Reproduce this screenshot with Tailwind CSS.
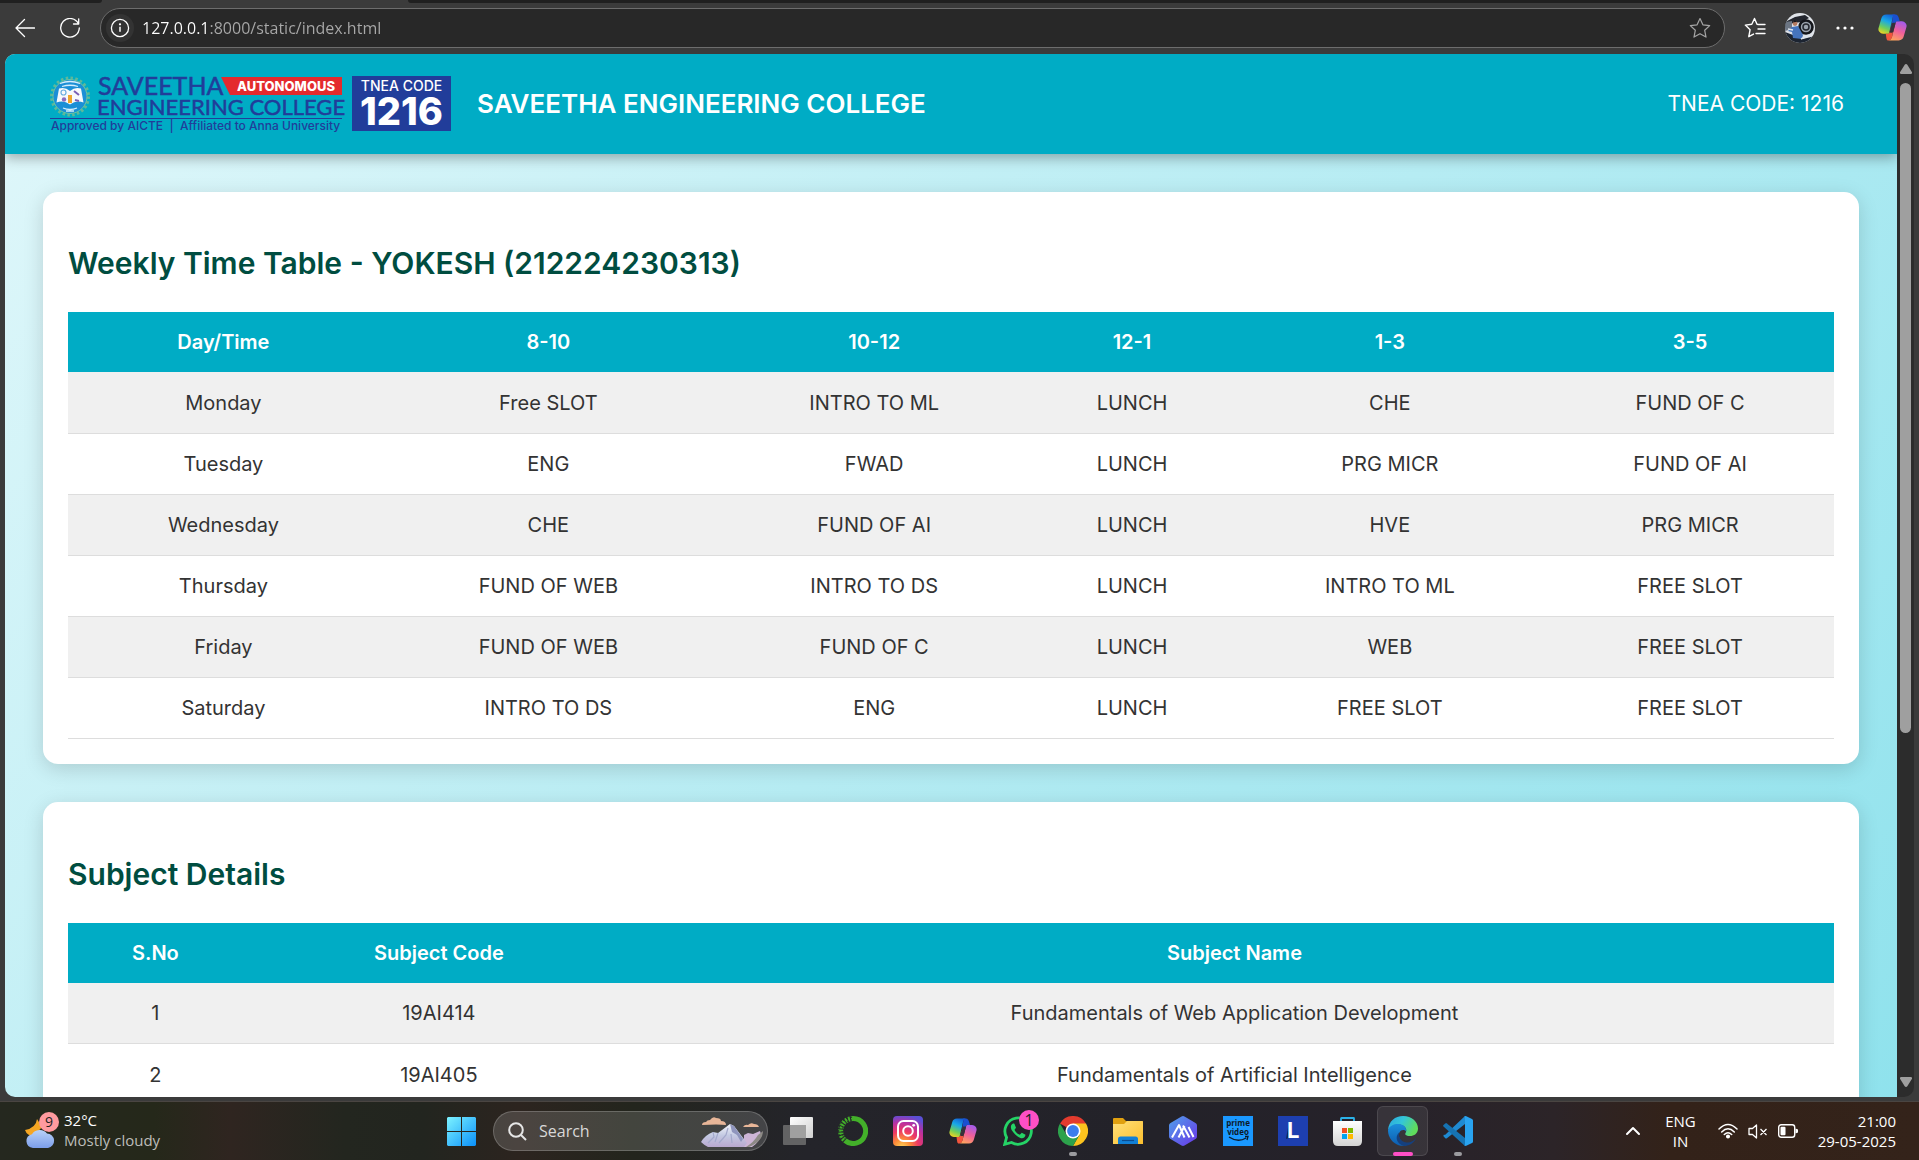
<!DOCTYPE html>
<html lang="en">
<head>
<meta charset="utf-8">
<title>Saveetha Engineering College - Time Table</title>
<script src="https://cdn.jsdelivr.net/npm/@tailwindcss/browser@4"></script>
</head>
<body class="flex h-screen flex-col overflow-hidden bg-[#3b3b3b] font-['Inter',sans-serif]">

<svg width="0" height="0" class="absolute" aria-hidden="true">
  <defs>
    <linearGradient id="cpA" x1="0.6" y1="0" x2="0.2" y2="1"><stop offset="0" stop-color="#1463d8"/><stop offset=".35" stop-color="#18a8e8"/><stop offset=".7" stop-color="#6fcf5a"/><stop offset="1" stop-color="#f4d321"/></linearGradient>
    <linearGradient id="cpB" x1="0.7" y1="0" x2="0.3" y2="1"><stop offset="0" stop-color="#a45bea"/><stop offset=".5" stop-color="#f0609a"/><stop offset="1" stop-color="#ffa55c"/></linearGradient>
    <symbol id="copilot" viewBox="0 0 28 26">
      <path d="M17.500 7H23a4.500 4.500 0 0 1 4.400 5.800l-2.600 9A5 5 0 0 1 20 25.500H9.500c3 0 3.600-2 4.300-4.500z" fill="url(#cpB)"/>
      <path d="M10.500 19H5a4.500 4.500 0 0 1-4.400-5.800l2.600-9A5 5 0 0 1 8 .5h10c-3 0-3.500 2-4.200 4.500z" fill="url(#cpA)"/>
      <path d="M13.500.5h3c2.500 0 3.200 1.800 3.800 4L21 7h-2.500c-1.200 0-1.800 1-2.200 2.500L15 13l-2-1 1-7C14.700 2 14.500.5 13.500.5z" fill="#1a4fd0"/>
      <path d="M7.500 19h2c1.200 0 1.800-1 2.200-2.500l1-3.500 2.200 1-1 7c-.7 2.500-1.300 4.500-4.200 4.500-1.500 0-1.500-2-2.200-6.500z" fill="#f2553d"/>
      <path d="m13.400 9.500-2 7.500q-.2 1 .8 1h1.500q.7 0 1-.8l2-7.500q.3-1.200-.8-1.200h-1.500q-.8 0-1 1z" fill="#37303a"/>
    </symbol>
  </defs>
</svg>

<!-- Browser toolbar -->
<header class="shrink-0">
  <div class="flex h-[3px] justify-between">
    <div class="w-[102px] rounded-br-lg bg-[#202020]"></div>
    <div class="ml-[306px] flex-1 rounded-bl-lg bg-[#202020]"></div>
  </div>
  <div class="flex h-[51px] items-center pr-3 pb-1 pl-2.5 pt-0.5">
    <button aria-label="Back" class="flex h-8 w-[30px] items-center justify-center">
      <svg class="size-5" viewBox="0 0 20 20" fill="none" stroke="#fff" stroke-width="1.3" stroke-linecap="round" stroke-linejoin="round"><path d="M19.500 10H1M9.500 1.500 1 10l8.500 8.500"/></svg>
    </button>
    <button aria-label="Refresh" class="ml-[15px] flex h-8 w-[30px] items-center justify-center">
      <svg class="size-5" viewBox="0 0 20 20" fill="none" stroke="#fff" stroke-width="1.3" stroke-linecap="round" stroke-linejoin="round"><path d="M18.500 6A9.300 9.300 0 1 0 19.300 10M18.700.8V6h-5.200"/></svg>
    </button>
    <div class="ml-[15px] flex h-10 flex-1 items-center rounded-full border border-[#6d6d6d] bg-[#282828] pl-[5px] pr-3">
      <button aria-label="Site information" class="flex size-[28px] items-center justify-center rounded-full bg-[#333333]">
        <svg class="size-5" viewBox="0 0 20 20" fill="none" stroke="#fff" stroke-width="1.3"><circle cx="10" cy="10" r="8.600"/><path d="M10 8.800v5" stroke-width="1.500"/><circle cx="10" cy="6.300" r=".5" fill="#fff"/></svg>
      </button>
      <input aria-label="Address" value="127.0.0.1:8000/static/index.html" class="ml-2 h-8 min-w-0 flex-1 bg-[linear-gradient(90deg,#fff_65px,#a9a9a9_65px)] bg-clip-text font-['Open_Sans',sans-serif] text-base text-transparent outline-none">
      <button aria-label="Add to favorites" class="flex size-6 items-center justify-center">
        <svg class="size-[22px]" viewBox="0 0 22 22" fill="none" stroke="#a5a5a5" stroke-width="1.200" stroke-linejoin="round"><path d="m11 1.500 2.900 6.300 6.800.8-5 4.700 1.300 6.800L11 16.700l-6 3.400 1.300-6.800-5-4.700 6.800-.8z"/></svg>
      </button>
    </div>
    <button aria-label="Favorites" class="ml-[18px] flex h-8 w-6 items-center justify-center">
      <svg class="h-[22px] w-[22px]" viewBox="0 0 22 22" fill="none" stroke="#fff" stroke-width="1.400" stroke-linecap="round" stroke-linejoin="round"><path d="M14.500 7.500 13 7.300 10.500 1.500 7.800 7.300l-6.500.8 4.800 4.600-1.300 7 4.700-2.600M14.500 7.500h6.500M14 12h7M12 16.500h9"/></svg>
    </button>
    <button aria-label="Profile" class="ml-[18px] size-[30px]">
      <svg class="size-[30px]" viewBox="0 0 30 30"><defs><clipPath id="av"><circle cx="15" cy="15" r="15"/></clipPath></defs><g clip-path="url(#av)"><path fill="#dfe3e8" d="M0 0h30v30H0z"/><path d="M10 4 20 2l4 3-7 4-9 1-8 5V9z" fill="#23262e"/><path d="M0 9l7-1v8l-7 2z" fill="#6c7684"/><circle cx="21" cy="14" r="6.500" fill="#9aa3ad" stroke="#14161b" stroke-width="2.600"/><circle cx="21" cy="14" r="3" fill="none" stroke="#23262e" stroke-width="1.500"/><path d="M0 19l8 3 10 4 12-3v7H0z" fill="#1c2431"/><path d="m7 14 6-1 5 9-1 4-9-1-1-6-4-1z" fill="#4574bd"/><circle cx="10" cy="10.500" r="2.400" fill="#b47a60"/><path d="m7.500 9.500 2-2.200 3 1.500z" fill="#15161a"/><path d="m3 16 5 1M16 26l8-4" stroke="#dbe3ee" stroke-width="1.500"/></g></svg>
    </button>
    <button aria-label="Settings and more" class="ml-[19px] flex h-8 w-[22px] items-center justify-center">
      <svg class="h-2 w-[18px]" viewBox="0 0 18 8" fill="#fff"><circle cx="2" cy="4" r="1.600"/><circle cx="9" cy="4" r="1.600"/><circle cx="16" cy="4" r="1.600"/></svg>
    </button>
    <button aria-label="Copilot" class="ml-[22px] h-[27px] w-[29px]"><svg class="h-[27px] w-[29px]"><use href="#copilot"/></svg></button>
  </div>
</header>

<!-- Page viewport -->
<div class="mx-[5px] mb-1 flex min-h-0 flex-1 overflow-hidden rounded-[10px] bg-[#2c2c2c]">
  <main class="min-w-0 flex-1 overflow-hidden">
    <div class="min-h-[1600px] bg-linear-[135deg,#e0f7fa,#80deea]">
      <div class="flex h-[100px] items-center bg-[#00acc5] pl-[45px] pr-[53px] text-white shadow-[0_4px_12px_rgba(0,0,0,0.3)]">
        <div class="flex items-start gap-2.5">
          <svg class="h-[56px] w-[292px] overflow-visible" viewBox="0 0 292 56" role="img" aria-label="Saveetha Engineering College">
            <circle cx="20" cy="20.500" r="18.500" fill="none" stroke="#5fb89a" stroke-width="3" stroke-dasharray="2.500 2.340"/>
            <circle cx="20" cy="20.500" r="17" fill="#1b8fd6" stroke="#6cc3a0" stroke-width="1"/>
            <path d="M10 7.500q10-4 20 0M12 10.500q8-2.500 16 0M13 32q7 3 14 0M16 35h8" stroke="#d5eefc" stroke-width="1.300" fill="none"/>
            <path d="M9 12.500q6-2 11 2.500 5-4.500 11-2.500l2.500 14q-7-3-13.500 2-6.500-5-13.500-2z" fill="#f7f9fb"/>
            <circle cx="13.500" cy="16.500" r="2.500" fill="none" stroke="#6aaee0" stroke-width="1.200"/><path d="m24 15 5 4M25 24l4 1" stroke="#7a5fb5" stroke-width="2"/><circle cx="14" cy="23.500" r="2.200" fill="#8c6cc0"/><path d="M18 19h4v8h-4z" fill="#f0a62c"/>
            <path d="M171 1h121v18H180z" fill="#e42a2d"/>
            <text x="48" y="19" font-family="Lato" font-size="25" fill="#213d9a" stroke="#213d9a" stroke-width=".5">SAVEETHA</text>
            <text x="187" y="15" font-family="Inter" font-weight="800" font-size="13" fill="#fff">AUTONOMOUS</text>
            <text x="47" y="39" font-family="Lato" font-size="22" fill="#213d9a" stroke="#213d9a" stroke-width=".5">ENGINEERING COLLEGE</text>
            <path d="M0 42.500h292" stroke="#213d9a" stroke-width="1.200"/>
            <text x="1" y="54" font-family="Inter" font-weight="500" font-size="12" fill="#213d9a">Approved by AICTE &#160;| &#160;Affiliated to Anna University</text>
          </svg>
          <svg class="h-[55px] w-[99px] overflow-visible" viewBox="0 0 99 55" role="img" aria-label="TNEA Code 1216">
            <path d="M0 0h99v55H0z" fill="#213d9a"/>
            <text x="49.500" y="15" text-anchor="middle" font-family="Inter" font-weight="500" font-size="14" fill="#fff">TNEA CODE</text>
            <text x="49.500" y="49" text-anchor="middle" font-family="Inter" font-weight="800" font-size="38" fill="#fff">1216</text>
          </svg>
        </div>
        <h1 class="ml-[26px] flex-1 pb-0.5 text-[26px] font-semibold whitespace-nowrap">SAVEETHA ENGINEERING COLLEGE</h1>
        <p class="text-[21px]">TNEA CODE: 1216</p>
      </div>

      <div class="flex flex-col gap-[38px] px-[38px] py-[38px] text-[#333]">
        <section class="rounded-[15px] bg-white p-[25px] shadow-[0_5px_20px_rgba(0,0,0,0.15)]">
          <h2 class="flex h-[95px] items-center pb-0.5 text-[30px] font-semibold text-[#004d40]">Weekly Time Table - YOKESH (212224230313)</h2>
          <table class="w-full table-fixed border-collapse text-center text-xl">
            <thead class="bg-[#00acc5] text-white">
              <tr class="h-[60px]"><th class="w-[17.6%] font-semibold">Day/Time</th><th class="w-[19.2%] font-semibold">8-10</th><th class="w-[17.7%] font-semibold">10-12</th><th class="w-[11.5%] font-semibold">12-1</th><th class="w-[17.7%] font-semibold">1-3</th><th class="font-semibold">3-5</th></tr>
            </thead>
            <tbody class="[&_td]:pt-px">
              <tr class="h-[61px] border-b border-[#ddd] bg-[#f0f0f0]"><td>Monday</td><td>Free SLOT</td><td>INTRO TO ML</td><td>LUNCH</td><td>CHE</td><td>FUND OF C</td></tr>
              <tr class="h-[61px] border-b border-[#ddd]"><td>Tuesday</td><td>ENG</td><td>FWAD</td><td>LUNCH</td><td>PRG MICR</td><td>FUND OF AI</td></tr>
              <tr class="h-[61px] border-b border-[#ddd] bg-[#f0f0f0]"><td>Wednesday</td><td>CHE</td><td>FUND OF AI</td><td>LUNCH</td><td>HVE</td><td>PRG MICR</td></tr>
              <tr class="h-[61px] border-b border-[#ddd]"><td>Thursday</td><td>FUND OF WEB</td><td>INTRO TO DS</td><td>LUNCH</td><td>INTRO TO ML</td><td>FREE SLOT</td></tr>
              <tr class="h-[61px] border-b border-[#ddd] bg-[#f0f0f0]"><td>Friday</td><td>FUND OF WEB</td><td>FUND OF C</td><td>LUNCH</td><td>WEB</td><td>FREE SLOT</td></tr>
              <tr class="h-[61px] border-b border-[#ddd]"><td>Saturday</td><td>INTRO TO DS</td><td>ENG</td><td>LUNCH</td><td>FREE SLOT</td><td>FREE SLOT</td></tr>
            </tbody>
          </table>
        </section>

        <section class="rounded-[15px] bg-white p-[25px] shadow-[0_5px_20px_rgba(0,0,0,0.15)]">
          <h2 class="flex h-24 items-center text-[30px] font-semibold text-[#004d40]">Subject Details</h2>
          <table class="w-full table-fixed border-collapse text-center text-xl">
            <thead class="bg-[#00acc5] text-white">
              <tr class="h-[60px]"><th class="w-[9.9%] font-semibold">S.No</th><th class="w-[22.2%] font-semibold">Subject Code</th><th class="font-semibold">Subject Name</th></tr>
            </thead>
            <tbody class="[&_td]:pt-px">
              <tr class="h-[61px] border-b border-[#ddd] bg-[#f0f0f0]"><td>1</td><td>19AI414</td><td>Fundamentals of Web Application Development</td></tr>
              <tr class="h-[61px] border-b border-[#ddd]"><td>2</td><td>19AI405</td><td>Fundamentals of Artificial Intelligence</td></tr>
            </tbody>
          </table>
        </section>
      </div>
    </div>
  </main>
  <!-- Scrollbar -->
  <div class="flex w-[17px] shrink-0 flex-col items-center py-2.5">
    <svg class="h-2.5 w-3" viewBox="0 0 12 10" fill="#9f9f9f"><path d="M6 0q.8 0 1.300.8L12 8.200q.3 1.800-1.200 1.800H1.200Q-.3 10 0 8.200L4.700.8Q5.200 0 6 0z"/></svg>
    <div class="mt-[9px] h-[63.5%] w-[11px] rounded-full bg-[#9f9f9f]"></div>
    <svg class="mt-auto h-2.5 w-3 rotate-180" viewBox="0 0 12 10" fill="#9f9f9f"><path d="M6 0q.8 0 1.300.8L12 8.200q.3 1.800-1.200 1.800H1.200Q-.3 10 0 8.200L4.700.8Q5.200 0 6 0z"/></svg>
  </div>
</div>

<!-- Taskbar -->
<footer class="grid h-[59px] shrink-0 grid-cols-[1fr_auto_1fr] items-center border-t border-[#4a4542] bg-[linear-gradient(90deg,#25281f_0%,#25281a_8%,#2f2520_12%,#23261f_18%,#22251f_22%,#2c241f_27%,#23251d_33%,#24242a_42%,#232229_60%,#26222a_72%,#2c2428_81%,#332219_87%,#34231a_100%)] font-['Open_Sans',sans-serif] text-white">
  <button class="flex items-center gap-1 justify-self-start pb-0.5 pl-6 text-left">
    <svg class="size-9" viewBox="0 0 36 36"><defs><linearGradient id="cl" x1="0" y1="0" x2="0" y2="1"><stop offset="0" stop-color="#b9d2f8"/><stop offset="1" stop-color="#7c9eea"/></linearGradient></defs><path d="M13 7q-1 9-12 11 2 6 9 6l8-9z" fill="#f5a623"/><path d="M9 36a7.500 7 0 0 1-1-13.700 8.500 7.500 0 0 1 15-.8A7.300 7.300 0 0 1 24 36z" fill="url(#cl)"/><circle cx="25" cy="10" r="10" fill="#ff9a9f"/><text x="25" y="15" text-anchor="middle" font-size="14" fill="#222">9</text></svg>
    <span class="flex flex-col text-[15px] leading-5"><span>32°C</span><span class="text-[#bdbdb9]">Mostly cloudy</span></span>
  </button>

  <nav class="flex items-center" aria-label="Apps">
    <button aria-label="Start" class="flex h-[50px] w-[55px] items-center justify-center">
      <svg class="size-[29px]" viewBox="0 0 29 29"><defs><linearGradient id="win" x1="0" y1="0" x2="1" y2="1"><stop offset="0" stop-color="#7df3ff"/><stop offset="1" stop-color="#0a90fa"/></linearGradient></defs><path fill="url(#win)" d="M1 0h13v14H0V1zM15 0h13l1 1v13H15zM0 15h14v14H1l-1-1zM15 15h14v13l-1 1H15z"/></svg>
    </button>
    <div class="mr-0.5 ml-1 flex h-10 w-[275px] items-center rounded-full border border-white/20 bg-white/15 pl-3.5">
      <svg class="size-[19px] shrink-0" viewBox="0 0 19 19" fill="none" stroke="#e6e6e6" stroke-width="2"><circle cx="8" cy="8" r="6.800"/><path d="m13 13 5 5"/></svg>
      <input type="text" aria-label="Search" placeholder="Search" class="ml-3 min-w-0 flex-1 bg-transparent text-base text-white outline-none placeholder:text-[#d8d8d8]">
      <svg class="mr-[3px] h-[34px] w-[64px] shrink-0" viewBox="0 0 64 34"><defs><linearGradient id="mt" x1="0" y1="0" x2="0" y2="1"><stop offset="0" stop-color="#f4f6fc"/><stop offset=".5" stop-color="#c3c9e2"/><stop offset="1" stop-color="#b9a8cf"/></linearGradient></defs><path d="M2 11q0-3 4-3 1-2 4-2 3-4 6-2 5 0 5 3 5 0 5 4-8-1-24 0zM43 13q2-3 5-2 3-3 6-1 4 0 5 3z" fill="#e8b698"/><path d="M44 33V21l4-2 5 1 7-3 1 3q-1 8-9 13z" fill="#cdb5d6"/><path d="M63 17q0 10-14 16h-3q8-5 12-12z" fill="#8d8a86"/><path d="M1 28q4-7 12-10l5 1 12-9 4 2 13 17-3 4H8q-4-2-7-5z" fill="url(#mt)"/><path d="m30 10 2 8 5 3 4 7 2-3-9-13z" fill="#8f95bd"/><path d="m13 18 1 5-6 6M18 19l-3 9M28 14l-2 7-7 8M31 20l1 9" stroke="#a3a8cb" stroke-width="1.200" fill="none"/></svg>
    </div>
    <button aria-label="Task view" class="flex h-[50px] w-[55px] items-center justify-center">
      <svg class="size-[30px]" viewBox="0 0 30 30"><defs><linearGradient id="tv" x1="0" y1="0" x2="1" y2="1"><stop offset="0" stop-color="#fff"/><stop offset="1" stop-color="#d0d0d0"/></linearGradient></defs><rect x="7" y="1" width="23" height="21" rx="1" fill="url(#tv)"/><rect y="9" width="23" height="20" rx="1" fill="#6e6e6e" fill-opacity=".85"/><path d="M7 9h16v13H7z" fill="#a0a0a0"/></svg>
    </button>
    <button aria-label="Anaconda" class="flex h-[50px] w-[55px] items-center justify-center">
      <svg class="size-[30px]" viewBox="0 0 30 30" fill="none" stroke="#43b02a"><path d="M15 2.500a12.500 12.500 0 1 1-8 22" stroke-width="5"/><path d="M15 2.500a12.500 12.500 0 0 0-8 22" stroke-width="5" stroke-dasharray="2 1"/><path d="M14 1.200A13.800 13.800 0 0 0 4 24" stroke="#232229" stroke-width="1" stroke-dasharray="2 2"/><path d="M14 4A11.500 11.500 0 0 0 7 23" stroke="#232229" stroke-width="1" stroke-dasharray="1.500 2.500"/></svg>
    </button>
    <button aria-label="Instagram" class="flex h-[50px] w-[55px] items-center justify-center">
      <svg class="size-[30px]" viewBox="0 0 30 30"><defs><radialGradient id="ig" cx=".3" cy="1.050" r="1.100"><stop offset="0" stop-color="#ffd55a"/><stop offset=".25" stop-color="#fc8d38"/><stop offset=".5" stop-color="#ee3a63"/><stop offset=".75" stop-color="#bb30a0"/><stop offset="1" stop-color="#5b4fd6"/></radialGradient></defs><rect width="30" height="30" rx="4" fill="url(#ig)"/><g fill="none" stroke="#fff" stroke-width="2"><rect x="5" y="5" width="20" height="20" rx="5.500"/><circle cx="15" cy="15" r="4.800"/></g><circle cx="20.700" cy="9.300" r="1.400" fill="#fff"/></svg>
    </button>
    <button aria-label="Copilot" class="flex h-[50px] w-[55px] items-center justify-center"><svg class="h-[26px] w-[28px]"><use href="#copilot"/></svg></button>
    <button aria-label="WhatsApp" class="relative flex h-[50px] w-[55px] items-center justify-center">
      <svg class="size-[30px]" viewBox="0 0 30 30"><path d="M1.700 28.300 3.600 21.500A13.200 13.200 0 1 1 8.500 26.500z" fill="none" stroke="#25d366" stroke-width="2.800"/><path d="M10 7.500c-3 1.500-2.500 5-.5 7.800 2 3 4.500 5.300 7.800 6.600 2.800 1 5-.6 5.200-3.200l-3.700-1.900-2 2c-2.600-1-4.300-2.800-5.300-5l1.500-2-1.600-4c-.4-.4-1-.4-1.400-.3z" fill="#25d366"/></svg>
      <span class="absolute top-1 right-1.5 flex size-5 items-center justify-center rounded-full bg-[#ff4fc6] text-base text-[#222]">1</span>
    </button>
    <button aria-label="Chrome" class="relative flex h-[50px] w-[55px] items-center justify-center">
      <svg class="size-[30px]" viewBox="0 0 30 30"><path d="M15 15 2 7.500A15 15 0 0 1 28 7.500z" fill="#e33b2e"/><path d="M15 15V7.500h13A15 15 0 0 1 15 30l6.500-11.200z" fill="#fcc31e"/><path d="M15 15l6.500 3.700L15 30A15 15 0 0 1 2 7.500l6.500 11.200z" fill="#2da24c"/><circle cx="15" cy="15" r="7.500" fill="#fff"/><circle cx="15" cy="15" r="5.900" fill="#3b7ded"/></svg>
      <span class="absolute bottom-0 h-1 w-2 rounded-full bg-[#9b9b9f]"></span>
    </button>
    <button aria-label="File Explorer" class="flex h-[50px] w-[55px] items-center justify-center">
      <svg class="size-[30px]" viewBox="0 0 30 30"><defs><linearGradient id="fo" x1="0" y1="0" x2="1" y2="1"><stop offset="0" stop-color="#ffe07a"/><stop offset="1" stop-color="#fbbf2e"/></linearGradient></defs><path d="M0 3q0-1 1-1h9l3 3h16q1 0 1 1v8H0z" fill="#e0a010"/><path d="M0 8h11l3-3h15q1 0 1 1v22H0z" fill="url(#fo)"/><path d="M5 28v-5q0-2.500 2.500-2.500h15Q25 20.500 25 23v5z" fill="#1280d6"/><path d="M9 24.500h12" stroke="#0a4c91" stroke-width="1.200"/></svg>
    </button>
    <button aria-label="AI app" class="flex h-[50px] w-[55px] items-center justify-center">
      <svg class="size-[30px]" viewBox="0 0 30 30"><defs><linearGradient id="hx" x1="0" y1="0" x2="1" y2="1"><stop offset="0" stop-color="#4fa0ea"/><stop offset="1" stop-color="#6a35e8"/></linearGradient></defs><path d="M13.500.5q1.500-.8 3 0L27.500 7q1.500.8 1.500 2.500v11q0 1.700-1.500 2.500l-11 6.500q-1.500.8-3 0L2.500 23Q1 22.200 1 20.500v-11Q1 7.800 2.500 7z" fill="url(#hx)"/><path d="M4 21.500 11 9l5.500 12.500M10.500 21.500 16.500 10M15 9.500l6.500 12M20.500 11l5 10" fill="none" stroke="#fff" stroke-width="2" stroke-linejoin="round"/></svg>
    </button>
    <button aria-label="Prime Video" class="flex h-[50px] w-[55px] items-center justify-center">
      <svg class="size-[30px]" viewBox="0 0 30 30"><path d="M0 0h30v30H0z" fill="#1a98ff"/><text x="15" y="10" text-anchor="middle" font-family="Open Sans" font-weight="700" font-size="8" fill="#0d1a2a">prime</text><text x="15" y="18.500" text-anchor="middle" font-family="Open Sans" font-weight="700" font-size="8" fill="#0d1a2a">video</text><path d="M6 21q9 6 17 1M22 20.500h3l-1 3.500" fill="none" stroke="#0d1a2a" stroke-width="1.300"/></svg>
    </button>
    <button aria-label="L app" class="flex h-[50px] w-[55px] items-center justify-center">
      <svg class="size-[30px]" viewBox="0 0 30 30"><path d="M0 0h30v30H0z" fill="#1d3fb0"/><path d="M11 6v16l-3 1z" fill="#0c2a55"/><text x="9" y="22" font-family="Inter" font-weight="700" font-size="22" fill="#fff">L</text></svg>
    </button>
    <button aria-label="Microsoft Store" class="flex h-[50px] w-[55px] items-center justify-center">
      <svg class="size-[30px]" viewBox="0 0 30 30"><defs><linearGradient id="st" x1="0" y1="0" x2="0" y2="1"><stop offset="0" stop-color="#fff"/><stop offset="1" stop-color="#d4d4d4"/></linearGradient></defs><path d="M8 6V2.500Q8 2 8.500 2h12q.5 0 .5.500V6" fill="none" stroke="#2bb2e8" stroke-width="1.800"/><path d="M0 5h29v20q0 5-5 5H5q-5 0-5-5z" fill="url(#st)"/><path d="M9 12h5v5H9z" fill="#f05022"/><path d="M15 12h5v5h-5z" fill="#7fba00"/><path d="M9 18h5v5H9z" fill="#00a4ef"/><path d="M15 18h5v5h-5z" fill="#ffb900"/></svg>
    </button>
    <button aria-label="Edge" class="relative flex h-[50px] w-[55px] items-center justify-center">
      <span class="absolute inset-x-0.5 inset-y-0 rounded-md border border-white/10 bg-white/8"></span>
      <svg class="relative size-[30px]" viewBox="0 0 30 30"><defs><linearGradient id="e1" x1="0" y1="0" x2="1" y2=".4"><stop offset="0" stop-color="#2aa5e0"/><stop offset=".5" stop-color="#34c6d8"/><stop offset="1" stop-color="#5fdc5c"/></linearGradient><linearGradient id="e2" x1="0" y1="0" x2="0" y2="1"><stop offset="0" stop-color="#1b8fdc"/><stop offset="1" stop-color="#0d5cae"/></linearGradient></defs><path d="M0 14C1 5 7 0 15 0c9 0 15 6 15 12.500 0 5-4 7.500-8 7.500-4.500 0-5.500-1.700-4.200-3.500C20 12 15 8 10 8.500 5 9 1.500 11 0 14z" fill="url(#e1)"/><path d="M0 14c2-5 7-6.500 11-6 5 .5 8 4 7 7.500-1.500-2-5-2-6.500 1C9 21 14 29 20 28.500 17 30.500 11 30.500 6.500 27 2 23.500 0 19 0 14z" fill="url(#e2)"/><path d="M11.500 16c-2 4 1 10 7 10.500 4 .3 7.500-1.500 9.500-4.500-1.500 4-5.500 8-12 8C9 28 6 21 11.500 16z" fill="#15407f"/></svg>
      <span class="absolute bottom-0 h-1 w-5 rounded-full bg-[#ff4fc6]"></span>
    </button>
    <button aria-label="Visual Studio Code" class="relative flex h-[50px] w-[55px] items-center justify-center">
      <svg class="size-[30px]" viewBox="0 0 30 30"><path d="M22 0 2.500 18.500Q1.800 19.200 1 18.600L.3 20l2 2.200q.8.600 1.600 0L22 8z" fill="#1f8ad2"/><path d="M22 30 .5 10.500q-.7-.8 0-1.500l1.800-1.600q.8-.6 1.600 0L22 22z" fill="#1673b3"/><path d="M21.500.3q.8-.5 1.800-.1L29 3q1 .5 1 1.500v21q0 1-1 1.500l-5.700 2.800q-1 .4-1.800-.3l.5-1V1.500z" fill="#29a3f0"/></svg>
      <span class="absolute bottom-0 h-1 w-2 rounded-full bg-[#9b9b9f]"></span>
    </button>
  </nav>

  <div class="flex items-center justify-self-end pr-[23px] text-[15px] leading-5">
    <button aria-label="Show hidden icons" class="mr-6 flex h-8 w-4 items-center"><svg class="h-2.5 w-4" viewBox="0 0 16 10" fill="none" stroke="#fff" stroke-width="2" stroke-linecap="round" stroke-linejoin="round"><path d="m2 8 6-6 6 6"/></svg></button>
    <button class="flex flex-col items-center"><span>ENG</span><span>IN</span></button>
    <button aria-label="Network, volume and battery" class="ml-[22px] flex items-center gap-2.5">
      <svg class="h-4 w-5" viewBox="0 0 20 16" fill="none" stroke="#fff" stroke-width="1.500" stroke-linecap="round"><path d="M1 6Q10-3 19 6M3.700 9Q10 2.500 16.300 9M6.300 11.500q3.700-3.500 7.400 0"/><circle cx="10" cy="13.500" r="1.300" fill="#fff"/></svg>
      <svg class="h-[15px] w-5" viewBox="0 0 20 15" fill="none" stroke="#fff" stroke-width="1.300" stroke-linejoin="round"><path d="M8.500 1v13L4.500 10.500H1v-6h3.500zM12.500 5l6 6M18.500 5l-6 6"/></svg>
      <svg class="h-3.5 w-5" viewBox="0 0 20 14"><rect x=".7" y=".7" width="16" height="12.600" rx="2.500" fill="none" stroke="#fff" stroke-width="1.400"/><rect x="2.500" y="2.800" width="5" height="8.400" rx="1" fill="#fff"/><path d="M17.500 4.500 20 5.500v3l-2.500 1z" fill="#fff"/></svg>
    </button>
    <button class="ml-5 flex flex-col items-end"><span>21:00</span><span>29-05-2025</span></button>
  </div>
</footer>
</body>
</html>
